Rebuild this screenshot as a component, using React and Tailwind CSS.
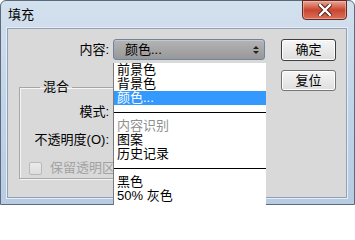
import React from "react";

const font = { fontFamily: '"Liberation Sans", "Noto Sans CJK SC", sans-serif' };

function Item({ children, active, disabled }) {
  return (
    <div
      className={
        "h-[14px] pl-[3px] text-[13px] leading-[14px] whitespace-nowrap " +
        (active ? "bg-[#3399ff] text-white" : disabled ? "text-[#8f8f8f]" : "text-black")
      }
    >
      {children}
    </div>
  );
}

function Sep() {
  return (
    <div className="h-[14px] flex flex-col justify-center">
      <div className="h-px bg-black" />
    </div>
  );
}

export default function App() {
  return (
    <div className="relative w-[355px] h-[205px] overflow-hidden bg-white" style={font}>
      <div className="w-[355px] h-[205px] flex flex-col rounded-t-[6px] border border-[#5b6a7c] bg-gradient-to-b from-[#d3e0ee] via-[#c2d4e8] to-[#b7cbe2]">
        {/* Title bar */}
        <div className="h-[27px] flex items-start justify-between pl-[7px] pr-[7px]">
          <div className="pt-[7px] text-[13px] leading-[14px] text-black">填充</div>
          <div className="w-[45px] h-[20px] -mt-px rounded-b-[4px] border border-[#5e2a24] bg-gradient-to-b from-[#e6a797] via-[#c9442f] to-[#d9705a] flex items-center justify-center shadow-[inset_0_0_0_1px_rgba(255,200,190,0.5)]">
            <svg width="14" height="12" viewBox="0 0 14 12">
              <path d="M2 1 L12 11 M12 1 L2 11" stroke="#4a1a14" strokeWidth="4.2" strokeLinecap="square" />
              <path d="M2 1 L12 11 M12 1 L2 11" stroke="#ffffff" strokeWidth="2.4" strokeLinecap="square" />
            </svg>
          </div>
        </div>
        {/* Client */}
        <div className="ml-[6px] mr-[7px] h-[170px] border border-[#8fa1b6] bg-[#d9d9d9] flex pt-[10px] shadow-[0_0_0_1px_#e6edf5]">
          {/* Left column */}
          <div className="w-[258px] flex flex-col">
            <div className="flex items-center h-[21px]">
              <div className="w-[105px] pr-[4px] text-right text-[13px] leading-[14px] text-black">内容:</div>
              <div className="w-[152px] h-[21px] rounded-[3px] border border-[#6f84a0] bg-gradient-to-b from-[#b4b4b4] to-[#989898] flex items-center justify-between pl-[11px] pr-[5px] shadow-[inset_0_1px_0_#c8c8c8]">
                <span className="text-[13px] leading-[14px] text-black">颜色...</span>
                <svg width="6" height="10" viewBox="0 0 6 10">
                  <path d="M0 4 L3 1 L6 4 Z" fill="#222" />
                  <path d="M0 6 L3 9 L6 6 Z" fill="#222" />
                </svg>
              </div>
            </div>
            <fieldset className="ml-[11px] mt-[19px] w-[246px] h-[100px] border border-[#a6a6a6] shadow-[inset_1px_1px_0_#f4f4f4,1px_1px_0_#f4f4f4] px-0 pb-[4px]">
              <legend className="ml-[20px] px-[3px] text-[13px] leading-[16px] text-black">混合</legend>
              <div className="mt-[6px] h-[22px] flex items-center">
                <div className="w-[89px] text-right text-[13px] leading-[14px] text-black">模式:</div>
              </div>
              <div className="mt-[6px] h-[22px] flex items-center">
                <div className="w-[89px] text-right text-[13px] leading-[14px] text-black">不透明度(O):</div>
              </div>
              <div className="mt-[10px] h-[14px] flex items-center pl-[9px] gap-[8px]">
                <div className="w-[13px] h-[13px] rounded-[2px] border border-[#b9b9b9] bg-gradient-to-b from-[#ececec] to-[#dcdcdc]" />
                <span className="text-[13px] leading-[14px] text-[#a2a2a2] whitespace-nowrap">保留透明区域</span>
              </div>
            </fieldset>
          </div>
          {/* Buttons */}
          <div className="ml-[15px] flex flex-col gap-[9px]">
            <button className="w-[55px] h-[22px] rounded-[3px] border border-[#3e3e3e] bg-gradient-to-b from-[#f6f6f6] to-[#dedede] shadow-[inset_0_0_0_1px_#ffffff] text-[13px] leading-[14px] text-black">
              确定
            </button>
            <button className="w-[55px] h-[21px] rounded-[3px] border border-[#747474] bg-gradient-to-b from-[#f6f6f6] to-[#dedede] shadow-[inset_0_0_0_1px_#ffffff] text-[13px] leading-[14px] text-black">
              复位
            </button>
          </div>
        </div>
      </div>
      {/* Dropdown list */}
      <div className="absolute left-[113px] top-[63px] w-[153px] h-[150px] bg-white border-l border-[#7a7a7a]">
        <Item>前景色</Item>
        <Item>背景色</Item>
        <Item active>颜色...</Item>
        <Sep />
        <Item disabled>内容识别</Item>
        <Item>图案</Item>
        <Item>历史记录</Item>
        <Sep />
        <Item>黑色</Item>
        <Item>50% 灰色</Item>
      </div>
    </div>
  );
}
